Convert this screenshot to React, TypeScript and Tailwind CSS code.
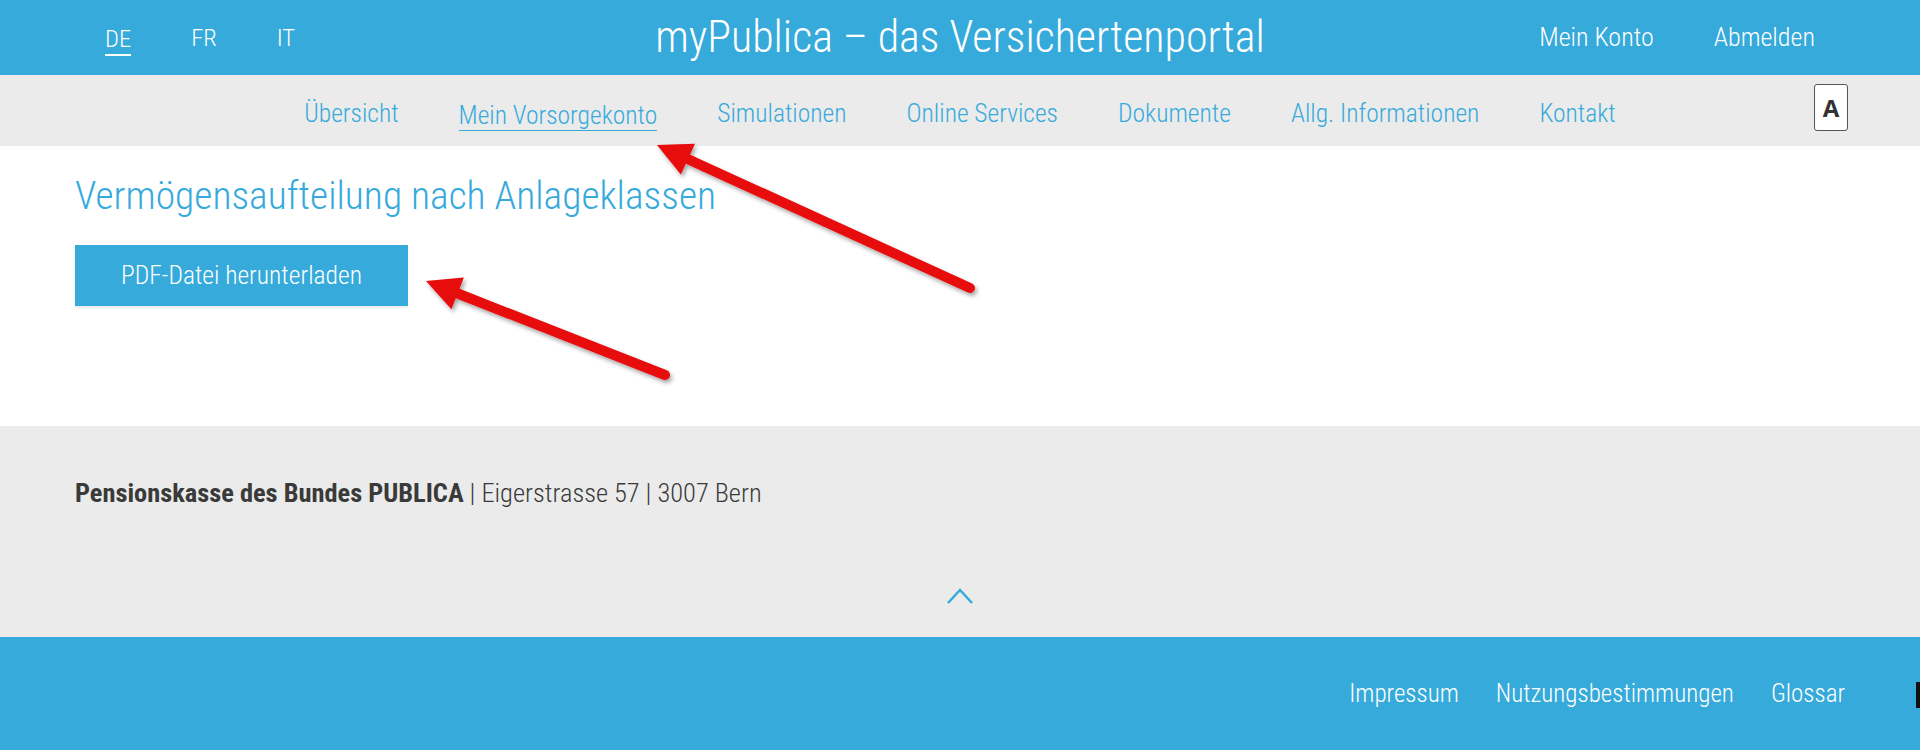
import React from "react";

function Arrow({ tx, ty, sx, sy }: { tx: number; ty: number; sx: number; sy: number }) {
  const dx = tx - sx;
  const dy = ty - sy;
  const len = Math.sqrt(dx * dx + dy * dy);
  const ux = dx / len;
  const uy = dy / len;
  const L = 34;
  const W = 17;
  const bx = tx - ux * L;
  const by = ty - uy * L;
  const nx = -uy;
  const ny = ux;
  const p1 = `${tx},${ty}`;
  const p2 = `${bx + nx * W},${by + ny * W}`;
  const p3 = `${bx - nx * W},${by - ny * W}`;
  return (
    <g filter="url(#shadow)">
      <line x1={sx} y1={sy} x2={bx + ux * 4} y2={by + uy * 4} stroke="#e8080a" strokeWidth={10} strokeLinecap="round" />
      <polygon points={`${p1} ${p2} ${p3}`} fill="#e8080a" />
    </g>
  );
}

export default function App() {
  const cond = "font-['Roboto',sans-serif] [font-stretch:75%]";
  return (
    <div className={`relative w-full min-h-[750px] bg-white ${cond}`}>
      {/* Top bar */}
      <header className="h-[75px] bg-[#36aadb] grid grid-cols-[1fr_auto_1fr] items-center px-[105px] text-white">
        <div className="flex items-center gap-[60px] text-[24.5px] font-light">
          <span className="border-b-2 border-white leading-[30px] mt-[4px]">DE</span>
          <span className="leading-[30px]">FR</span>
          <span className="leading-[30px]">IT</span>
        </div>
        <h1 className="text-[44px] font-light leading-none pb-[2px]">myPublica – das Versichertenportal</h1>
        <div className="flex items-center justify-end gap-[60px] text-[26px] font-light">
          <span>Mein Konto</span>
          <span>Abmelden</span>
        </div>
      </header>

      {/* Nav bar */}
      <nav className="relative h-[71px] bg-[#ebebeb] flex items-center justify-center gap-[60px] pt-[5px] text-[25.5px] font-light text-[#36aadb]">
        <span>Übersicht</span>
        <span className="border-b-[1.5px] border-[#36aadb] leading-[30px] mt-[4px]">Mein Vorsorgekonto</span>
        <span>Simulationen</span>
        <span>Online Services</span>
        <span>Dokumente</span>
        <span>Allg. Informationen</span>
        <span>Kontakt</span>
        <div className="absolute left-[1814px] top-[9px] w-[34px] h-[47px] bg-white border border-[#555] rounded-[3px] flex items-center justify-center font-['Open_Sans',sans-serif] [font-stretch:100%] font-bold text-[24px] text-[#333]">
          A
        </div>
      </nav>

      {/* Main */}
      <main className="h-[280px] bg-white pl-[75px] pt-[26px]">
        <h2 className="text-[39.5px] font-light text-[#36aadb] leading-[47px]">Vermögensaufteilung nach Anlageklassen</h2>
        <button className="mt-[26px] w-[333px] h-[61px] bg-[#36aadb] text-white text-[25.5px] font-light shadow-[0_2px_2px_rgba(0,0,0,0.08)]">
          PDF-Datei herunterladen
        </button>
      </main>

      {/* Footer gray */}
      <section className="h-[211px] bg-[#ebebeb] pl-[75px] pt-[52px] flex flex-col">
        <p className="text-[26.4px] text-[#3a3a3a] leading-[30px] font-light">
          <span className="font-bold">Pensionskasse des Bundes PUBLICA</span> | Eigerstrasse 57 | 3007 Bern
        </p>
        <div className="flex justify-center mt-[79px] pr-[75px]">
          <svg width="28" height="18" viewBox="0 0 28 18">
            <polyline points="2,16 14,3 26,16" fill="none" stroke="#36aadb" strokeWidth="2.5" />
          </svg>
        </div>
      </section>

      {/* Footer blue */}
      <footer className="relative h-[113px] bg-[#36aadb] flex items-center justify-end pr-[75px] gap-[37px] text-white text-[25px] font-light">
        <span>Impressum</span>
        <span>Nutzungsbestimmungen</span>
        <span>Glossar</span>
        <div className="absolute right-0 top-[45px] w-[4px] h-[26px] bg-[#111]" />
      </footer>

      {/* Annotation arrows */}
      <svg className="absolute left-0 top-0 pointer-events-none" width="1920" height="750">
        <defs>
          <filter id="shadow" x="-20%" y="-20%" width="140%" height="140%">
            <feDropShadow dx="2" dy="3" stdDeviation="2" floodColor="#000" floodOpacity="0.35" />
          </filter>
        </defs>
        <Arrow tx={657} ty={145} sx={970} sy={288} />
        <Arrow tx={426} ty={281} sx={665} sy={375} />
      </svg>
    </div>
  );
}
